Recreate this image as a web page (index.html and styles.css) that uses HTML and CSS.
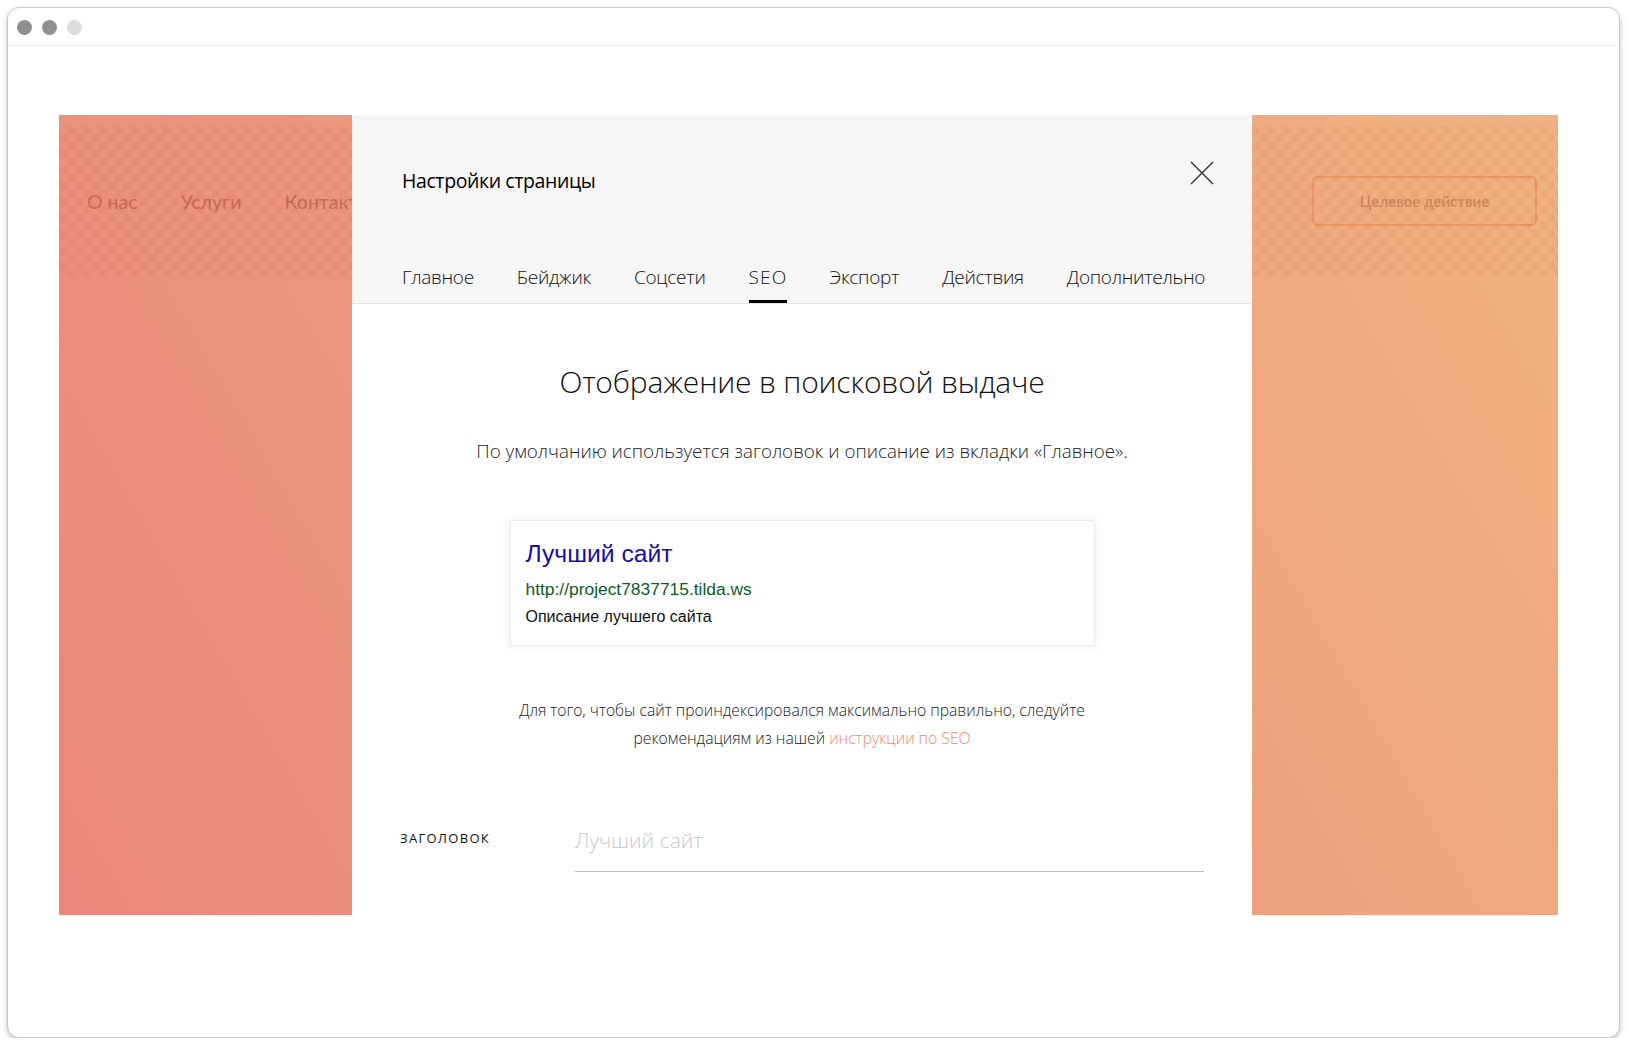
FILE: index.html
```html
<!DOCTYPE html>
<html lang="ru">
<head>
<meta charset="utf-8">
<title>Настройки страницы</title>
<link rel="stylesheet" href="styles.css">
</head>
<body>
<div class="window">
  <div class="titlebar">
    <span class="dot dark"></span>
    <span class="dot dark"></span>
    <span class="dot light"></span>
  </div>
  <div class="viewport">
    <div class="stage">
      <div class="band">
        <nav class="nav">
          <span>О нас</span>
          <span>Услуги</span>
          <span>Контакты</span>
        </nav>
        <div class="cta">Целевое действие</div>
      </div>

      <div class="modal">
        <div class="modal-head">
          <div class="modal-title-row">
            <div class="modal-title">Настройки страницы</div>
            <svg class="close" width="24" height="24" viewBox="0 0 24 24">
              <path d="M1 1 L23 23 M23 1 L1 23" stroke="#333" stroke-width="1.4" fill="none"/>
            </svg>
          </div>
          <div class="tabs">
            <span class="tab">Главное</span>
            <span class="tab">Бейджик</span>
            <span class="tab">Соцсети</span>
            <span class="tab active latin">SEO</span>
            <span class="tab">Экспорт</span>
            <span class="tab">Действия</span>
            <span class="tab">Дополнительно</span>
          </div>
        </div>
        <div class="modal-body">
          <h2 class="heading">Отображение в поисковой выдаче</h2>
          <p class="sub">По умолчанию используется заголовок и описание из вкладки «Главное».</p>
          <div class="snippet">
            <div class="sn-title">Лучший сайт</div>
            <div class="sn-url">http://project7837715.tilda.ws</div>
            <div class="sn-desc">Описание лучшего сайта</div>
          </div>
          <p class="note">Для того, чтобы сайт проиндексировался максимально правильно, следуйте<br>рекомендациям из нашей <span class="link">инструкции по SEO</span></p>
          <div class="field">
            <div class="label">Заголовок</div>
            <div class="input">Лучший сайт</div>
          </div>
        </div>
      </div>
    </div>
  </div>
</div>
</body>
</html>
```

FILE: styles.css
```css
* { box-sizing: border-box; }
html, body { margin: 0; padding: 0; background: #fff; }
body {
  padding: 7px 0 0 7px;
  font-family: "Open Sans", "Noto Sans", sans-serif;
}
.window {
  width: 1613px;
  height: 1031px;
  border: 1px solid #c9c9c9;
  border-radius: 12px;
  box-shadow: 0 2px 5px rgba(0,0,0,0.25);
  background: #fff;
  overflow: hidden;
}
.titlebar {
  height: 38px;
  border-bottom: 1px solid #ececec;
  display: flex;
  align-items: center;
  gap: 10px;
  padding-left: 9px;
  padding-top: 1px;
}
.dot {
  width: 15px;
  height: 15px;
  border-radius: 50%;
}
.dot.dark { background: #909090; }
.dot.light { background: #dcdcdc; }

.viewport {
  padding: 69px 0 0 51px;
}
.stage {
  position: relative;
  width: 1499px;
  height: 800px;
  padding-top: 11px;
  background: linear-gradient(60deg, #e8887a 0%, #ec9a7a 45%, #f0b282 100%);
}
.band {
  height: 150px;
  background-image: conic-gradient(rgba(150,60,30,0.06) 25%, transparent 0 50%, rgba(150,60,30,0.06) 0 75%, transparent 0);
  background-size: 16px 16px;
  display: flex;
  align-items: center;
  justify-content: space-between;
  padding: 0 21px 0 28px;
}
.nav {
  display: flex;
  gap: 43px;
  font-family: "Lato", "Open Sans", sans-serif;
  font-size: 19.5px;
  font-weight: 500;
  color: rgba(165,75,45,0.5);
}
.cta {
  width: 225px;
  height: 50px;
  border: 2px solid rgba(235,140,90,0.75);
  border-radius: 6px;
  display: flex;
  align-items: center;
  justify-content: center;
  font-family: "Lato", "Open Sans", sans-serif;
  font-size: 15px;
  font-weight: 700;
  color: rgba(185,105,65,0.55);
}

.modal {
  position: absolute;
  left: 293px;
  top: 0;
  width: 900px;
  height: 800px;
  background: #fff;
}
.modal-head {
  background: #f6f6f6;
  border-bottom: 1px solid #e4e4e4;
  height: 189px;
  padding: 0 38px 0 50px;
  display: flex;
  flex-direction: column;
}
.modal-title-row {
  display: flex;
  justify-content: space-between;
  align-items: flex-start;
  padding-top: 46px;
}
.modal-title {
  font-size: 19.5px;
  color: #000;
  font-weight: 400;
  line-height: 40px;
  letter-spacing: -0.4px;
}
.tabs {
  display: flex;
  gap: 43px;
  margin-top: auto;
}
.tab {
  font-size: 19px;
  font-weight: 300;
  color: #111;
  line-height: 24px;
  padding: 0 0 11px;
  border-bottom: 3px solid transparent;
  letter-spacing: -0.3px;
}
.tab.latin { letter-spacing: 1.2px; margin-right: -1px; }
.tab.active { border-bottom-color: #000; }

.modal-body {
  padding: 0 48px;
  display: flex;
  flex-direction: column;
  align-items: center;
}
.heading {
  margin: 58px 0 0;
  font-size: 30px;
  font-weight: 300;
  color: #111;
  line-height: 40px;
  letter-spacing: -0.2px;
}
.sub {
  margin: 37px 0 0;
  font-size: 18.8px;
  font-weight: 300;
  color: #222;
  line-height: 24px;
}
.snippet {
  margin-top: 57px;
  width: 585px;
  height: 126px;
  border: 1px solid #ececec;
  box-shadow: 0 0 10px rgba(0,0,0,0.08);
  padding: 18px 15px 0;
  font-family: "Liberation Sans", Arial, sans-serif;
}
.sn-title {
  font-size: 24.7px;
  color: #1a0dab;
  line-height: 30px;
}
.sn-url {
  margin-top: 10px;
  font-size: 17.4px;
  color: #0d5c2a;
  line-height: 20px;
}
.sn-desc {
  margin-top: 8px;
  font-size: 16px;
  color: #111;
  line-height: 20px;
}
.note {
  margin: 50px 0 0;
  text-align: center;
  font-size: 15.7px;
  font-weight: 300;
  color: #222;
  line-height: 28px;
}
.link { color: #f4866c; }
.field {
  align-self: stretch;
  display: flex;
  margin-top: 73px;
}
.label {
  width: 175px;
  font-size: 13px;
  text-transform: uppercase;
  color: #111;
  letter-spacing: 1.3px;
  padding-top: 4px;
}
.input {
  width: 629px;
  border-bottom: 1px solid #bdbdbd;
  font-size: 21px;
  font-weight: 300;
  color: #c8c8c8;
  line-height: 30px;
  padding-bottom: 16px;
}
```
